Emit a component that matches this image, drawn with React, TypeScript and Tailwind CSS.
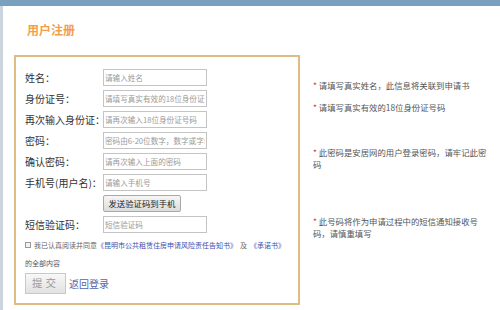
import React from "react";

const font = { fontFamily: '"Noto Sans CJK SC", "Noto Sans", sans-serif' };

function Row({ label, placeholder }: { label: string; placeholder: string }) {
  return (
    <div className="flex items-center h-[17px]">
      <div className="w-[78px] text-[10px] text-[#333] whitespace-nowrap leading-none">{label}</div>
      <input
        readOnly
        placeholder={placeholder}
        className="w-[104px] h-[17px] border border-[#c4c4c4] bg-white px-[1px] text-[7.6px] leading-none placeholder:text-[#9a9a9a] outline-none"
        style={font}
      />
    </div>
  );
}

export default function App() {
  return (
    <div className="w-[500px] h-[310px] overflow-hidden bg-white flex flex-col" style={font}>
      <div className="h-[6px] bg-[#7b9fbf] shrink-0" />
      <div className="flex flex-1">
        <div className="w-[3px] bg-[#ccd5de] shrink-0" />
        <div className="flex-1 pl-[11px]">
          <div className="h-[49px] pl-[13px] pt-[16px]">
            <div className="text-[12px] font-bold leading-[16px] text-[#f3a04a]">用户注册</div>
          </div>
          <div className="flex">
            <div className="w-[286px] h-[250px] border-2 border-[#dfbb86] pl-[9px] pt-[12px] shrink-0">
              <div className="flex flex-col gap-[4px]">
                <Row label="姓名：" placeholder="请输入姓名" />
                <Row label="身份证号：" placeholder="请填写真实有效的18位身份证号码" />
                <Row label="再次输入身份证：" placeholder="请再次输入18位身份证号码" />
                <Row label="密码：" placeholder="密码由6-20位数字，数字或字母组成" />
                <Row label="确认密码：" placeholder="请再次输入上面的密码" />
                <Row label="手机号(用户名)：" placeholder="请输入手机号" />
                <div className="flex h-[17px]">
                  <div className="w-[78px]" />
                  <button className="h-[17px] w-[78px] border border-[#a9a9a9] rounded-[2px] bg-gradient-to-b from-[#f6f6f6] to-[#dcdcdc] text-[8.4px] text-[#222] leading-none whitespace-nowrap">
                    发送验证码到手机
                  </button>
                </div>
                <Row label="短信验证码：" placeholder="短信验证码" />
              </div>
              <div className="flex items-center h-[12px] mt-[6px] whitespace-nowrap text-[7px] leading-none">
                <span className="w-[6px] h-[6px] border border-[#999] bg-[#f4f4f4] mr-[3px] shrink-0" />
                <span className="text-[#666]">我已认真阅读并同意</span>
                <span className="text-[#3a4fb0]">《昆明市公共租赁住房申请风险责任告知书》</span>
                <span className="text-[#666] mx-[3px]">及</span>
                <span className="text-[#3a4fb0]">《承诺书》</span>
              </div>
              <div className="mt-[9px] text-[7px] leading-none text-[#555]">的全部内容</div>
              <div className="flex items-center mt-[6px]">
                <button className="w-[41px] h-[21px] border border-[#c8c8c8] bg-gradient-to-b from-[#f8f8f8] to-[#e2e2e2] text-[10.5px] text-[#999] tracking-[3px] leading-none">
                  提交
                </button>
                <span className="ml-[3px] text-[10px] text-[#5566aa] leading-none">返回登录</span>
              </div>
            </div>
            <div className="pl-[13px] pt-[24px] text-[8.4px] leading-[12px] text-[#555] whitespace-nowrap">
              <div>
                <span className="text-[#e03c3c]">*</span> 请填写真实姓名，此信息将关联到申请书
              </div>
              <div className="mt-[10px]">
                <span className="text-[#e03c3c]">*</span> 请填写真实有效的18位身份证号码
              </div>
              <div className="mt-[33px]">
                <span className="text-[#e03c3c]">*</span> 此密码是安居网的用户登录密码，请牢记此密
                <br />码
              </div>
              <div className="mt-[45px]">
                <span className="text-[#e03c3c]">*</span> 此号码将作为申请过程中的短信通知接收号
                <br />码，请慎重填写
              </div>
            </div>
          </div>
        </div>
      </div>
    </div>
  );
}
